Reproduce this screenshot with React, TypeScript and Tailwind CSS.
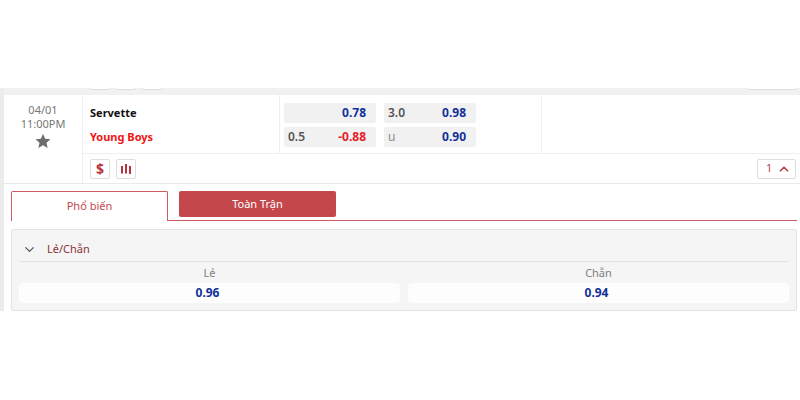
import { useState } from 'react';
import { ChevronDown, ChevronUp } from 'lucide-react';

interface OddsProps {
  line?: string;
  price: string;
  muted?: boolean;
}

function OddsButton({ line, price, muted }: OddsProps) {
  const priceColor = price.startsWith('-') ? 'text-[#e6202a]' : 'text-[#12309a]';

  return (
    <button
      type="button"
      className="flex h-5 w-full items-center justify-between rounded-xs bg-[#f1f1f1] pl-1 pr-2.5 text-xs"
    >
      <span className={muted ? 'text-[#8a8a8a]' : 'font-semibold text-[#555]'}>{line}</span>
      <span className={`font-bold ${priceColor}`}>{price}</span>
    </button>
  );
}

function StatsIcon() {
  return (
    <svg viewBox="0 0 12 12" className="h-3 w-3" fill="none" stroke="currentColor" strokeWidth="2" aria-hidden="true">
      <path d="M2 3v7.5M6 1v9.5M10 3v8" />
    </svg>
  );
}

function StarIcon() {
  return (
    <svg viewBox="0 0 24 24" className="h-4 w-4" fill="#6e6e6e" aria-hidden="true">
      <path d="M12 1l3.2 7.5 8.1.7-6.1 5.4 1.8 8L12 18.4 5 22.6l1.8-8L.7 9.2l8.1-.7z" />
    </svg>
  );
}

// the cut-off end of the match above this one
function PreviousMatch() {
  return (
    <div className="flex h-[7px] items-start bg-[#f1f1f1] pl-[86px] pr-1">
      <div className="flex flex-1 gap-1.5">
        <div className="h-0.5 w-5 rounded-b-sm border border-t-0 border-[#ddd] bg-white" />
        <div className="h-0.5 w-5 rounded-b-sm border border-t-0 border-[#ddd] bg-white" />
        <div className="h-0.5 w-5 rounded-b-sm border border-t-0 border-[#ddd] bg-white" />
      </div>
      <div className="h-0.5 w-12 rounded-b-sm border border-t-0 border-[#ddd] bg-white" />
    </div>
  );
}

function MatchRow({ open, onToggle }: { open: boolean; onToggle: () => void }) {
  return (
    <div className="flex border-b border-[#e9e9e9]">
      <div className="flex w-[79px] shrink-0 flex-col items-center border-r border-[#eee] pt-2 text-[11px] leading-[14px] text-[#777]">
        <span>04/01</span>
        <span>11:00PM</span>
        <button type="button" aria-label="Favorite" className="mt-0.5">
          <StarIcon />
        </button>
      </div>

      <div className="min-w-0 flex-1">
        <div className="flex h-[59px] border-b border-[#eee]">
          <div className="flex w-[197px] shrink-0 flex-col gap-1 border-r border-[#eee] pl-[7px] pt-2 text-[11px] font-bold leading-5">
            <span className="text-[#111]">Servette</span>
            <span className="text-[#f01414]">Young Boys</span>
          </div>
          <div className="flex w-[262px] shrink-0 gap-2 border-r border-[#eee] pl-1 pt-2">
            <div className="flex w-[92px] flex-col gap-1">
              <OddsButton price="0.78" />
              <OddsButton line="0.5" price="-0.88" />
            </div>
            <div className="flex w-[92px] flex-col gap-1">
              <OddsButton line="3.0" price="0.98" />
              <OddsButton line="u" price="0.90" muted />
            </div>
          </div>
        </div>

        <div className="flex h-[29px] items-center gap-1.5 pl-[7px] pr-1 text-[#b8323c]">
          <button
            type="button"
            aria-label="Cash out"
            className="flex h-5 w-5 items-center justify-center rounded-xs border border-[#ddd] bg-white text-sm font-bold"
          >
            $
          </button>
          <button
            type="button"
            aria-label="Statistics"
            className="flex h-5 w-5 items-center justify-center rounded-xs border border-[#ddd] bg-white"
          >
            <StatsIcon />
          </button>
          <button
            type="button"
            aria-expanded={open}
            onClick={onToggle}
            className="ml-auto flex h-5 w-[39px] items-center justify-between rounded-xs border border-[#ddd] bg-white pl-2 pr-1 text-[11px] text-[#b8424e]"
          >
            1
            {open ? <ChevronUp size={14} strokeWidth={3} /> : <ChevronDown size={14} strokeWidth={3} />}
          </button>
        </div>
      </div>
    </div>
  );
}

function Tabs() {
  return (
    <div className="flex h-[30px]">
      <button
        type="button"
        className="w-[157px] shrink-0 rounded-t-xs border border-b-0 border-[#cf5a62] bg-white text-[11px] text-[#c4474c]"
      >
        Phổ biến
      </button>
      <div className="flex flex-1 items-start border-b border-[#cf5a62] pl-[11px]">
        <button type="button" className="h-[26px] w-[157px] rounded-xs bg-[#c4474c] text-[11px] text-white">
          Toàn Trận
        </button>
      </div>
    </div>
  );
}

const selections = [
  { name: 'Lẻ', price: '0.96' },
  { name: 'Chẵn', price: '0.94' },
];

function MarketPanel() {
  const [expanded, setExpanded] = useState(true);

  return (
    <section className="mt-2 rounded-xs border border-[#e4e4e4] bg-[#f5f5f5] px-[7px] pb-[7px]">
      <button
        type="button"
        aria-expanded={expanded}
        onClick={() => setExpanded(!expanded)}
        className="flex h-8 w-full items-center gap-2.5 border-b border-[#e2e2e2] pl-[3px] pt-2 text-[11px] text-[#8b3238]"
      >
        <ChevronDown size={15} strokeWidth={2} className="text-[#555]" />
        Lẻ/Chẵn
      </button>
      {expanded && (
        <div className="grid grid-cols-2 gap-2">
          {selections.map((s) => (
            <div key={s.name} className="text-center">
              <div className="h-[21px] text-[11px] leading-[22px] text-[#808080]">{s.name}</div>
              <button
                type="button"
                className="block h-5 w-full rounded-sm bg-[#fdfdfd] pr-1 text-xs font-bold leading-5 text-[#12309a]"
              >
                {s.price}
              </button>
            </div>
          ))}
        </div>
      )}
    </section>
  );
}

export default function App() {
  const [open, setOpen] = useState(true);

  return (
    <main className="min-h-screen bg-white py-[88px] font-['Noto_Sans',sans-serif]">
      <div className="border-l-4 border-[#ececec]">
        <PreviousMatch />
        <MatchRow open={open} onToggle={() => setOpen(!open)} />
        {open && (
          <div className="pl-[7px] pr-[3px] pt-[7px]">
            <Tabs />
            <MarketPanel />
          </div>
        )}
      </div>
    </main>
  );
}
